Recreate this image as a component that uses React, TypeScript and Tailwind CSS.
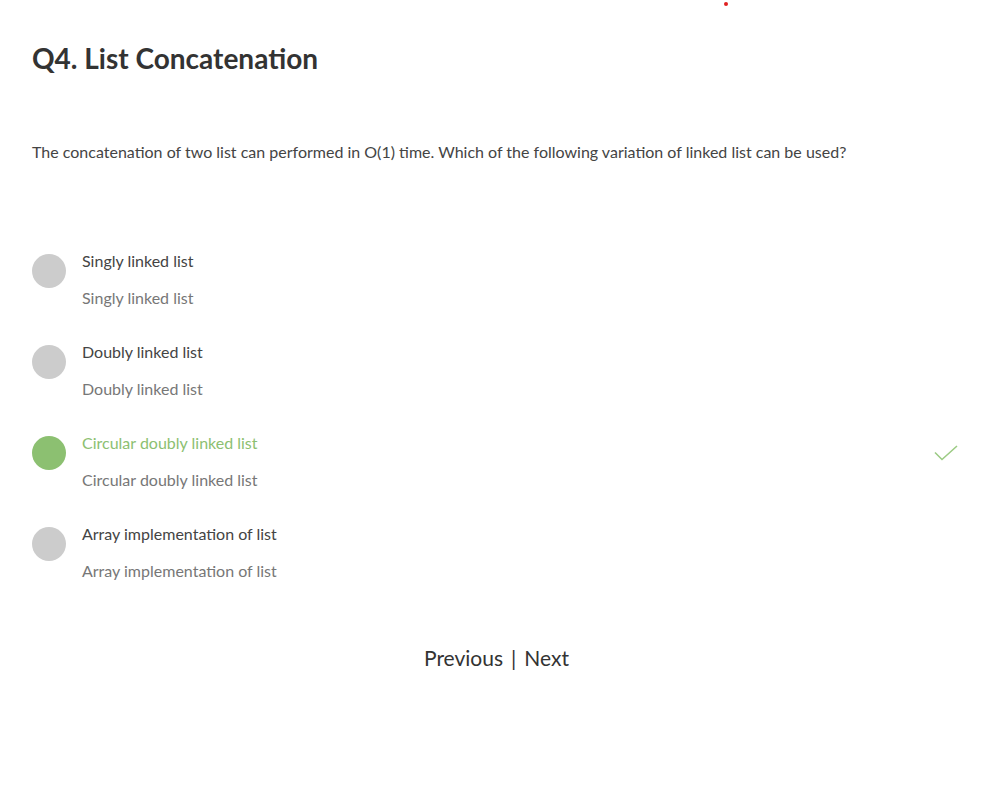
const options = [
  { label: 'Singly linked list', correct: false },
  { label: 'Doubly linked list', correct: false },
  { label: 'Circular doubly linked list', correct: true },
  { label: 'Array implementation of list', correct: false },
]

export default function App() {
  return (
    <div className="relative min-h-[787px] bg-white px-8 text-[#333]" style={{ fontFamily: 'Lato, "Open Sans", sans-serif' }}>
      <span className="absolute left-[724px] top-[2px] h-[4px] w-[4px] rounded-full bg-[#e02020]" />
      <h1 className="pt-[41px] text-[28px] font-bold leading-[34px] text-[#333]">Q4. List Concatenation</h1>
      <p className="mt-[66px] text-[16px] leading-[22px] text-[#444]">
        The concatenation of two list can performed in O(1) time. Which of the following variation of linked list can be used?
      </p>

      <div className="mt-[88px] flex flex-col gap-[34px]">
        {options.map(o => (
          <div key={o.label} className="flex items-start">
            <div className={`mt-[3px] h-[34px] w-[34px] shrink-0 rounded-full ${o.correct ? 'bg-[#8cc071]' : 'bg-[#cccccc]'}`} />
            <div className="ml-[16px] flex-1">
              <div className={`text-[16px] leading-[20px] ${o.correct ? 'text-[#8cc071]' : 'text-[#444]'}`}>{o.label}</div>
              <div className="mt-[17px] text-[16px] leading-[20px] text-[#777]">{o.label}</div>
            </div>
            {o.correct && (
              <svg className="mr-[3px] mt-[12px]" width="24" height="16" viewBox="0 0 24 16" fill="none">
                <path d="M1 7.5 L8 14.5 L23 1" stroke="#9ccb84" strokeWidth="1.6" />
              </svg>
            )}
          </div>
        ))}
      </div>

      <div className="mt-[64px] flex items-center justify-center gap-[8px] text-[21px] leading-[26px] text-[#333]">
        <span>Previous</span>
        <span>|</span>
        <span>Next</span>
      </div>
    </div>
  )
}
